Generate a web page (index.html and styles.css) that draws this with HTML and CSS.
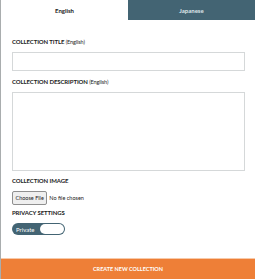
FILE: index.html
```html
<!DOCTYPE html>
<html lang="en">
<head>
    <meta charset="UTF-8" />
    <meta name="viewport" content="width=device-width, initial-scale=1.0"/>
    <title>New Collection</title>
    <link rel="stylesheet" href="styles.css">
</head>
<body>
    <div class="modal">
        <div class="tabs">
            <div class="tab active">English</div>
            <div class="tab">Japanese</div>
        </div>

        <form class="form">
            <label class="label">COLLECTION TITLE <span class="lang">(English)</span></label>
            <input type="text" class="field">

            <label class="label">COLLECTION DESCRIPTION <span class="lang">(English)</span></label>
            <textarea class="field area"></textarea>

            <label class="label">COLLECTION IMAGE</label>
            <div class="file-row">
                <span class="file-btn">Choose File</span>
                <span class="file-name">No file chosen</span>
            </div>

            <label class="label">PRIVACY SETTINGS</label>
            <div class="toggle">
                <span class="toggle-on">Private</span>
                <span class="toggle-knob"></span>
            </div>
        </form>

        <button class="submit">CREATE NEW COLLECTION</button>
    </div>
</body>
</html>
```

FILE: styles.css
```css
body {
    font-family: Lato, 'Open Sans', sans-serif;
    margin: 0;
    padding: 0;
    background-color: #fff;
    color: #222;
}
.modal {
    width: 255px;
    height: 279px;
    display: flex;
    flex-direction: column;
    border-left: 1px solid #a9adae;
    box-sizing: border-box;
}
.tabs {
    display: flex;
    height: 20px;
}
.tab {
    flex: 1;
    display: flex;
    align-items: center;
    justify-content: center;
    font-size: 6px;
    font-weight: bold;
    background-color: #436473;
    color: #dfe6ea;
}
.tab.active {
    background-color: #fff;
    color: #222;
}
.form {
    flex: 1;
    display: flex;
    flex-direction: column;
    padding: 18px 10px 0 11px;
}
.label {
    font-size: 6px;
    font-weight: bold;
    letter-spacing: -0.1px;
    line-height: 8px;
    margin-bottom: 6px;
}
.lang {
    font-weight: normal;
    font-size: 5.5px;
}
.field {
    height: 19px;
    border: 1px solid #d5d8d9;
    box-sizing: border-box;
    margin: 0 0 7px;
    padding: 0;
}
.area {
    height: 79px;
    resize: none;
    margin-bottom: 6px;
}
.file-row {
    display: flex;
    align-items: center;
    gap: 2px;
    margin-bottom: 4px;
    font-size: 5.5px;
}
.file-btn {
    background: #efefef;
    border: 1px solid #8f8f8f;
    border-radius: 2px;
    padding: 3px 2.5px;
    color: #222;
}
.toggle {
    display: flex;
    width: 53px;
    height: 12px;
    border-radius: 6px;
    background-color: #436473;
    align-items: center;
    padding: 1px;
    box-sizing: border-box;
}
.toggle-on {
    flex: 1;
    color: #fff;
    font-size: 6px;
    padding-left: 3px;
}
.toggle-knob {
    width: 24px;
    height: 10px;
    background: #fff;
    border-radius: 5px;
}
.submit {
    height: 21px;
    border: none;
    border-top: 1px solid #f8c9a8;
    background-color: #ee7f37;
    color: #fff;
    font-family: Lato, sans-serif;
    font-size: 5.5px;
    font-weight: bold;
    cursor: pointer;
}
```
